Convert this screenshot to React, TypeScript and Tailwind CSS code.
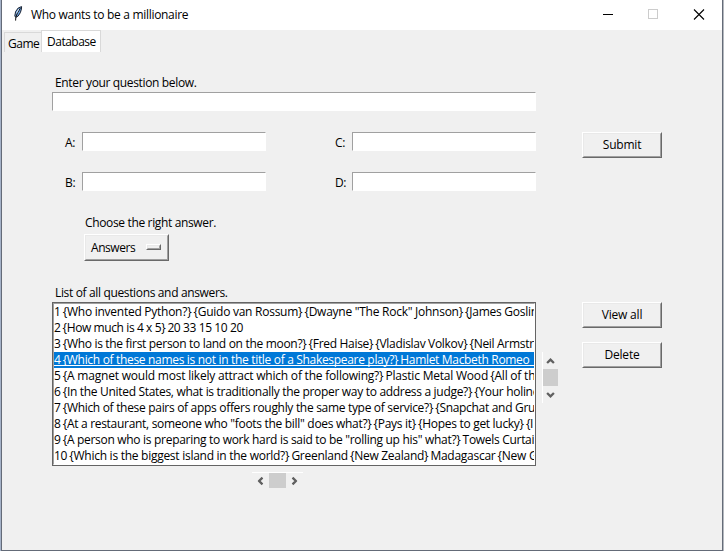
import React from "react";

const rows: { text: string; tracking: string }[] = [
  { text: '1 {Who invented Python?} {Guido van Rossum} {Dwayne "The Rock" Johnson} {James Goslin', tracking: "tracking-[-0.26px]" },
  { text: "2 {How much is 4 x 5} 20 33 15 10 20", tracking: "tracking-[-0.4px]" },
  { text: "3 {Who is the first person to land on the moon?} {Fred Haise} {Vladislav Volkov} {Neil Armstr", tracking: "tracking-[-0.31px]" },
  { text: "4 {Which of these names is not in the title of a Shakespeare play?} Hamlet Macbeth Romeo ", tracking: "tracking-[-0.32px]" },
  { text: "5 {A magnet would most likely attract which of the following?} Plastic Metal Wood {All of th", tracking: "tracking-[-0.21px]" },
  { text: "6 {In the United States, what is traditionally the proper way to address a judge?} {Your holine", tracking: "tracking-[-0.31px]" },
  { text: "7 {Which of these pairs of apps offers roughly the same type of service?} {Snapchat and Gru", tracking: "tracking-[-0.31px]" },
  { text: '8 {At a restaurant, someone who "foots the bill" does what?} {Pays it} {Hopes to get lucky} {I', tracking: "tracking-[-0.3px]" },
  { text: '9 {A person who is preparing to work hard is said to be "rolling up his" what?} Towels Curtai', tracking: "tracking-[-0.3px]" },
  { text: "10 {Which is the biggest island in the world?} Greenland {New Zealand} Madagascar {New G", tracking: "tracking-[-0.27px]" },
];

function Entry({ className }: { className: string }) {
  return (
    <div className={`h-[19px] border border-b-white border-l-[#a0a0a0] border-r-white border-t-[#a0a0a0] bg-white ${className}`} />
  );
}

function Field({ label }: { label: string }) {
  return (
    <div className="flex h-[19px]">
      <span className="h-[19px] w-[17px] leading-[21px]">{label}</span>
      <Entry className="w-[184px]" />
    </div>
  );
}

function Raised({ children, className }: { children?: React.ReactNode; className: string }) {
  return (
    <div className={`shrink-0 border border-b-[#696969] border-l-white border-r-[#696969] border-t-white ${className}`}>
      <div className="flex h-full w-full items-center border border-b-[#a0a0a0] border-l-[#e9e9e9] border-r-[#a0a0a0] border-t-[#e9e9e9]">
        {children}
      </div>
    </div>
  );
}

function Button({ label }: { label: string }) {
  return (
    <Raised className="h-[26px] w-[80px]">
      <span className="w-full text-center leading-4 tracking-[-0.2px]">{label}</span>
    </Raised>
  );
}

// Spaces on the outer side of a brace are narrower than word spaces.
function RowText({ text }: { text: string }) {
  return (
    <>
      {text.split(/((?<=\}) | (?=\{))/).map((part, i) =>
        part === " " ? (
          <span key={i} className="tracking-[-1px]">
            {part}
          </span>
        ) : (
          part
        )
      )}
    </>
  );
}

function Feather() {
  return (
    <svg width="12" height="18" viewBox="0 0 12 18" className="block">
      <path d="M9.6 1.6 6.2 3 3.6 6.6 2.8 11 3.8 12.4 6.2 11 8.4 7.6 9.4 4Z" fill="#6a9fdc" stroke="#1b2230" strokeWidth="1" />
      <path d="M8.4 3.2 5.4 8 3.8 12.4 3.6 15.6" fill="none" stroke="#111" strokeWidth="1" />
      <path d="M6.8 4 4.4 8.4" stroke="#cfe0f4" strokeWidth="1" />
    </svg>
  );
}

function Chevron({ turn }: { turn: string }) {
  return (
    <svg width="9" height="6" viewBox="0 0 9 6" className={`block shrink-0 ${turn}`}>
      <path d="M1.1 5 4.5 1.6 7.9 5" fill="none" stroke="#606060" strokeWidth="2.3" />
    </svg>
  );
}

export default function App() {
  return (
    <div className="flex h-[551px] w-[724px] overflow-hidden bg-[#f0f0f0] font-['Open_Sans','Noto_Sans',sans-serif] text-[12px] tracking-[-0.35px] whitespace-pre text-black">
      <div className="w-px bg-[#a5b2c8]" />
      <div className="flex w-[722px] flex-col border-b border-l border-r border-[#646b78]">
        <div className="flex h-[30px] bg-white">
          <div className="ml-[10px] mt-[5px] w-[19px]">
            <Feather />
          </div>
          <span className="leading-[30px] tracking-[-0.3px]">Who wants to be a millionaire</span>
          <div className="ml-auto flex">
            <svg width="120" height="30" viewBox="0 0 120 30" shapeRendering="crispEdges">
              <path d="M1 14.5H11" stroke="#000" />
              <path d="M46.5 9.5h9v9h-9z" fill="none" stroke="#ccc" />
              <path d="M92 9.5 102 19.5M102 9.5 92 19.5" stroke="#000" strokeWidth="1.1" shapeRendering="auto" />
            </svg>
          </div>
        </div>

        <div className="flex h-[22px] pl-[2px] tracking-[-0.5px]">
          <div className="mt-[2px] h-5 w-[37px] border-l border-t border-[#d9d9d9] pl-[3px] leading-[22px]">Game</div>
          <div className="h-[22px] w-[60px] border-l border-r border-t border-[#d9d9d9] bg-white pl-[5px] leading-[22px]">Database</div>
        </div>

        <div className="flex pl-[50px] pt-[21px]">
          <div className="flex w-[484px] flex-col">
            <span className="h-[19px] pl-[3px] leading-[20px]">Enter your question below.</span>
            <Entry className="w-[484px]" />
            <div className="mt-[21px] flex justify-between pl-[13px]">
              <Field label="A:" />
              <Field label="C:" />
            </div>
            <div className="mt-[21px] flex justify-between pl-[13px]">
              <Field label="B:" />
              <Field label="D:" />
            </div>
            <span className="mt-[22px] h-[21px] pl-[33px] leading-[20px]">Choose the right answer.</span>
            <Raised className="ml-[32px] h-[27px] w-[85px]">
              <span className="w-[60px] shrink-0 pl-[5px] leading-4 tracking-[-0.45px]">Answers</span>
              <Raised className="mb-px h-[6px] w-[15px]" />
            </Raised>
            <span className="mt-[22px] h-[19px] pl-[3px] leading-[20px]">List of all questions and answers.</span>
            <div className="h-[164px] w-[484px] border border-[#646464] bg-white">
              <div className="h-[162px] overflow-hidden border border-b-white border-l-[#a0a0a0] border-r-white border-t-[#a0a0a0]">
                {rows.map((r, i) => (
                  <div
                    key={i}
                    className={`relative h-4 leading-4 ${r.tracking} ${i === 3 ? "bg-[#0078d7] text-white" : ""}`}
                  >
                    <RowText text={r.text} />
                    {i === 3 && <div className="absolute bottom-[2px] left-0 h-px w-full bg-white" />}
                  </div>
                ))}
              </div>
            </div>
            <div className="ml-[200px] mt-[6px] flex h-[16px] w-[51px] items-center border-t border-white">
              <div className="flex w-[17px] justify-center pr-px">
                <Chevron turn="-rotate-90" />
              </div>
              <div className="h-[15px] w-[17px] bg-[#cdcdcd]" />
              <div className="flex w-[17px] justify-center">
                <Chevron turn="rotate-90" />
              </div>
            </div>
          </div>

          <div className="ml-[6px] mt-[279px] flex h-[51px] w-[16px] flex-col items-center border-l border-white">
            <div className="flex h-[17px] items-center">
              <Chevron turn="rotate-0" />
            </div>
            <div className="h-[17px] w-[15px] bg-[#cdcdcd]" />
            <div className="flex h-[17px] items-center">
              <Chevron turn="rotate-180" />
            </div>
          </div>

          <div className="ml-[24px] mt-[59px] flex w-[80px] flex-col">
            <Button label="Submit" />
            <div className="mt-[144px] flex flex-col gap-[14px]">
              <Button label="View all" />
              <Button label="Delete" />
            </div>
          </div>
        </div>
      </div>
      <div className="w-px bg-[#b4b8be]" />
    </div>
  );
}
